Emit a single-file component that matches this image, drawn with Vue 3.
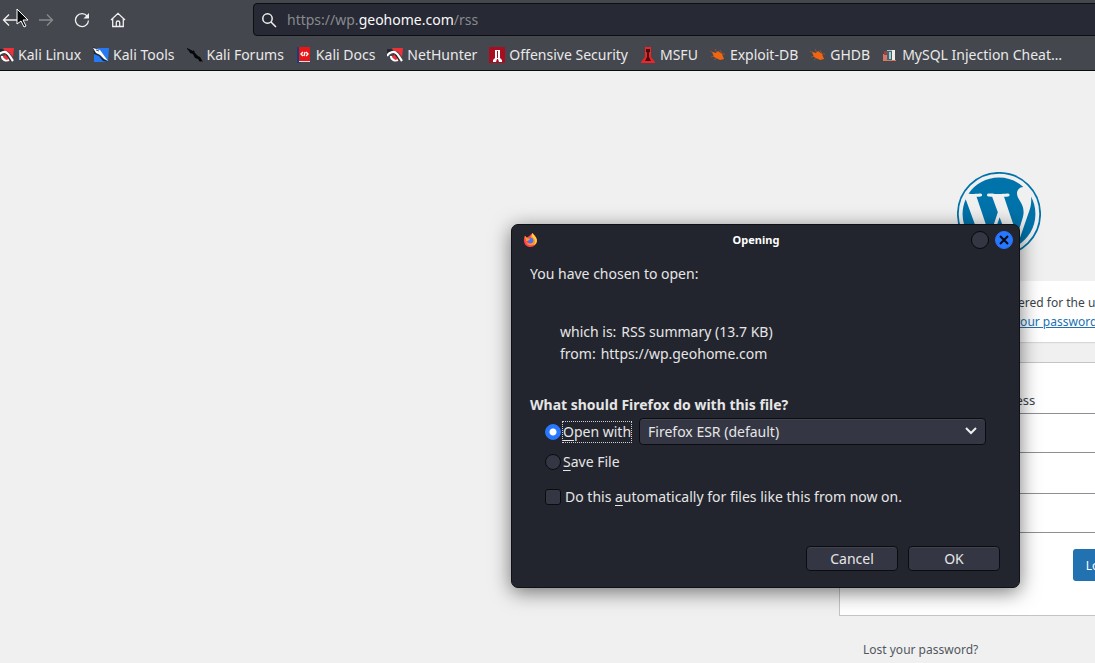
<script setup>
import { ref } from 'vue'

const action = ref('open')
const automatic = ref(false)
const bookmarks = [
  { label: 'Kali Linux', icon: 'dragon' },
  { label: 'Kali Tools', icon: 'tools' },
  { label: 'Kali Forums', icon: 'forums' },
  { label: 'Kali Docs', icon: 'docs' },
  { label: 'NetHunter', icon: 'dragon' },
  { label: 'Offensive Security', icon: 'offsec' },
  { label: 'MSFU', icon: 'msfu' },
  { label: 'Exploit-DB', icon: 'bug' },
  { label: 'GHDB', icon: 'bug' },
  { label: 'MySQL Injection Cheat…', icon: 'books' }
]
</script>

<template>
  <div class="browser">
    <header class="chrome">
      <div class="nav">
        <button class="tool" aria-label="Back">
          <svg viewBox="0 0 16 16"><path d="M15 8H1.500M7 2.500 1.500 8 7 13.500" /></svg>
        </button>
        <button class="tool dim" aria-label="Forward">
          <svg viewBox="0 0 16 16"><path d="M1 8h13.500M9 2.500 14.500 8 9 13.500" /></svg>
        </button>
        <button class="tool" aria-label="Reload">
          <svg viewBox="0 0 16 16"><path d="M13.200 4.200A6.500 6.500 0 1 0 14.500 8.500" /><path class="solid" d="M15 1v5.600H9.400z" /></svg>
        </button>
        <button class="tool" aria-label="Home">
          <svg viewBox="0 0 16 16"><path d="M1 8 8 1.300 15 8M2.700 6.800v7.700h10.600V6.800M6.300 14.500v-4.200q0-1.300 1.700-1.300t1.700 1.300v4.200" /></svg>
        </button>
        <div class="url">
          <svg viewBox="0 0 16 16"><circle cx="6.500" cy="6.500" r="4.700" /><path d="m10 10 5 5" /></svg>
          <a href="#">https://wp.<b>geohome.com</b>/rss</a>
        </div>
      </div>
      <nav class="bookmarks">
        <a v-for="b in bookmarks" :key="b.label" href="#">
          <svg v-if="b.icon === 'dragon'" viewBox="0 0 16 16">
            <path fill="#ef3038" d="M5 1h11l-1 9-4-5-5-2zM5 9l3 5h4l-3-4z" />
            <path fill="#24262c" d="M0 2h4l3 2-7 5zM8 7l4 2 3 5-4-1-3-3z" />
            <path fill="none" stroke="#fff" stroke-width="2.200" d="M0 9C2 5 7 4 9 6c2 1 3 4 6 8M4 9c0 4 4 5 7 4" />
            <path fill="#ef3038" d="m5 9 2-2 4 5-3 1z" />
            <path fill="#3c3e45" d="M5 8c1-1 2-1 3-1L6 9z" />
          </svg>
          <svg v-else-if="b.icon === 'tools'" viewBox="0 0 16 16">
            <path fill="#2679f2" d="M1 1h15l-1 14H1z" />
            <path fill="#1b2838" d="m0 0 5 2 5 5 5 8-5-1-4-5-5-2z" />
            <path fill="#fff" d="m0 1 7 2 3 4 5 7-4-2-4-4-4-2z" />
            <path fill="none" stroke="#1b2838" stroke-width=".8" d="m3 3 3 1" />
          </svg>
          <svg v-else-if="b.icon === 'forums'" viewBox="0 0 16 16">
            <path fill="#050607" d="m0 1 6 3 2 2 3 3 2 1 3 5-2-1-1 1-2-3-3-1-2-4-3-1-1-2-2-2zM6 3l2 2-2 1z" />
          </svg>
          <svg v-else-if="b.icon === 'docs'" viewBox="0 0 16 16">
            <path fill="#173d7c" d="M1 0h4v16H1z" /><path fill="#e81616" d="M3 0h11v14H3z" /><path fill="#e0dfdf" d="M3 14h11v1H3z" />
            <path fill="none" stroke="#fff" stroke-width="1.300" d="m7 5-2 2 2 2M10 5l2 2-2 2M8 9l1-4" />
          </svg>
          <svg v-else-if="b.icon === 'offsec'" viewBox="0 0 16 16">
            <path fill="#a90d20" d="M0 0h16v16H0z" />
            <path fill="#fff" d="M6 3h5v8l2 2v2h-3l-1-3H8l-1 3H4v-2l2-2z" /><path fill="#a90d20" d="M8 4h1v7H8z" />
          </svg>
          <svg v-else-if="b.icon === 'msfu'" viewBox="0 0 16 16">
            <path fill="#ef2429" d="M5 0h6v10l4 5v1H1v-1l4-5z" /><path fill="#470b10" d="M7 3h2v7l2 4H5l2-4zM6 2h4v3H6z" />
          </svg>
          <svg v-else-if="b.icon === 'bug'" viewBox="0 0 16 16">
            <path fill="none" stroke="#a95a31" stroke-width=".7" d="m0 4 6 3M5 2l2 4M10 3l2 4M15 7h-4M1 10l4-1M4 13l4-3M14 12l-3-2" />
            <path fill="#f06412" d="m2 5 4 1 2-2 4 3 2 5-4 1-6-3z" />
          </svg>
          <svg v-else viewBox="0 0 16 16">
            <path fill="#d77962" d="M1 7h4v7H1zM1 13h13v1H1z" /><path fill="#a13d4a" d="M2 4h3v4H2z" />
            <path fill="#43656c" d="M5 3h6v10H5z" /><path fill="#a7cbd0" d="M7 5h2v7H7zM5 3h6v1H5z" /><path fill="#f2eee8" d="M10 3h3v10h-3z" />
          </svg>
          <span>{{ b.label }}</span>
        </a>
      </nav>
      <svg class="pointer" viewBox="0 0 13 20"><path d="M1 1v15l4-3 3 6 2-1-3-6h5z" /></svg>
    </header>

    <main class="page">
      <div class="login">
        <svg class="logo" viewBox="0 0 24 24" role="img" aria-label="WordPress">
          <circle cx="12" cy="12" r="11.760" />
          <path transform="translate(.42 .42) scale(.965)" d="M21.469 6.825c.84 1.537 1.318 3.300 1.318 5.175 0 3.979-2.156 7.456-5.363 9.325l3.295-9.527c.615-1.540.820-2.771.820-3.864 0-.405-.026-.780-.070-1.110m-7.981.105c.647-.030 1.232-.105 1.232-.105.582-.075.514-.930-.067-.899 0 0-1.755.135-2.880.135-1.064 0-2.850-.150-2.850-.150-.585-.030-.661.855-.075.885 0 0 .540.061 1.125.090l1.680 4.605-2.370 7.080L5.354 6.900c.649-.030 1.234-.100 1.234-.100.585-.075.516-.930-.065-.896 0 0-1.746.138-2.874.138-.200 0-.438-.008-.690-.015C4.911 3.150 8.235 1.215 12 1.215c2.809 0 5.365 1.072 7.286 2.833-.046-.003-.091-.009-.141-.009-1.060 0-1.812.923-1.812 1.914 0 .890.513 1.643 1.060 2.531.411.720.890 1.643.890 2.977 0 .915-.354 1.994-.821 3.479l-1.075 3.585-3.900-11.610zM12 22.784c-1.059 0-2.081-.153-3.048-.437l3.237-9.406 3.315 9.087c.024.053.050.101.078.149-1.120.393-2.325.609-3.582.609M1.211 12c0-1.564.336-3.050.935-4.390L7.290 21.709C3.694 19.960 1.212 16.271 1.211 12" />
        </svg>
        <div class="message">registered for the u<br><a href="#">your password</a></div>
        <form class="form" @submit.prevent>
          <label for="user">Username or Email Address</label>
          <input id="user" type="text">
          <input id="pass" type="password" aria-label="Password">
          <button class="login-button">Log In</button>
        </form>
        <a class="lost" href="#">Lost your password?</a>
      </div>
    </main>

    <section class="dialog" role="dialog" aria-labelledby="title">
      <div class="titlebar">
        <svg class="firefox" viewBox="0 0 16 16">
          <path fill="#ff4055" d="M1 6 2 3l2 2 3-2 3-3 3 3 2 4c0 5-3 8-7 8s-7-3-7-7z" />
          <path fill="#ff9a24" d="m2 3 2 2 4-1 3 4c0 4-6 4-8 1 1 4 7 6 10 2 2-3 0-7-3-8L2 6z" />
          <path fill="#ffd33d" d="M10 0 9 3l3 3c2 3 1 6-2 7 4 0 6-4 4-8z" />
          <circle cx="8" cy="8" r="3" fill="#4c6ff5" /><path fill="#ff9a24" d="m3 5 5 1-2 2-3 1z" />
        </svg>
        <h1 id="title">Opening</h1>
        <button class="round" aria-label="Maximize"></button>
        <button class="round close" aria-label="Close"><svg viewBox="0 0 10 10"><path d="m1 1 8 8M9 1 1 9" /></svg></button>
      </div>
      <div class="body">
        <p>You have chosen to open:</p>
        <div class="details">
          <p><span>which is:</span><span>RSS summary (13.7 KB)</span></p>
          <p><span>from:</span><span>https://wp.geohome.com</span></p>
        </div>
        <h2>What should Firefox do with this file?</h2>
        <div class="option open">
          <input id="open" v-model="action" type="radio" value="open">
          <label class="focused" for="open"><u>O</u>pen with</label>
          <div class="picker">
            <select aria-label="Application"><option>Firefox ESR (default)</option></select>
            <svg viewBox="0 0 12 8"><path d="m1 1 5 5 5-5" /></svg>
          </div>
        </div>
        <div class="option save">
          <input id="save" v-model="action" type="radio" value="save">
          <label for="save"><u>S</u>ave File</label>
        </div>
        <div class="option auto">
          <input id="auto" v-model="automatic" type="checkbox">
          <label for="auto">Do this <u>a</u>utomatically for files like this from now on.</label>
        </div>
        <div class="actions"><button>Cancel</button><button>OK</button></div>
      </div>
    </section>
  </div>
</template>

<style>
body { margin: 0; background: #f0f0f0; }
</style>

<style scoped>
* { box-sizing: border-box; }
.browser { position: relative; min-height: 100vh; overflow: hidden; font: 14px/22px "Noto Sans", sans-serif; }
button, input, select { font: inherit; margin: 0; }
h1, h2, p { margin: 0; }
a { color: inherit; text-decoration: none; }
.chrome { position: relative; height: 71px; background: #44474d; border-bottom: 1px solid #0c0d10; color: #e9e9ea; }
.nav { height: 39px; display: flex; align-items: center; gap: 20px; padding-left: 2px; }
.tool { width: 16px; height: 16px; padding: 0; border: 0; background: none; flex: none; }
.tool svg { display: block; width: 16px; height: 16px; fill: none; stroke: #f0f0f0; stroke-width: 1.300; }
.tool .solid { fill: #f0f0f0; stroke: none; }
.dim { opacity: .4; }
.url { flex: 1; height: 33px; margin: 0 -8px 0 107px; padding-left: 7px; display: flex; align-items: center; gap: 10px; background: #272934; border: 1px solid #0d0e12; border-radius: 4px; color: #87898f; }
.url svg { width: 16px; height: 16px; fill: none; stroke: #f0f0f0; stroke-width: 1.500; }
.url b { font-weight: 400; color: #fafafa; }
.bookmarks { display: flex; gap: 12px; margin-left: -2px; height: 32px; align-items: center; white-space: nowrap; }
.bookmarks a { display: flex; gap: 4px; align-items: center; flex: none; }
.bookmarks svg { width: 16px; height: 16px; }
.pointer { position: absolute; left: 16px; top: 8px; width: 13px; height: 20px; }
.pointer path { fill: #08090b; stroke: #fff; }
.page { display: flex; justify-content: flex-end; color: #3c434a; font-size: 12px; line-height: 19px; }
.login { width: 320px; flex: none; margin-right: -64px; padding-top: 101px; }
.logo { display: block; width: 84px; height: 84px; margin: 0 auto 25px 118px; fill: #0073aa; }
.logo circle { fill: none; stroke: #0073aa; stroke-width: .5; }
.message { height: 61px; padding: 12px 0 12px 147px; background: #fff; box-shadow: 0 1px 1px #0000001a; white-space: nowrap; }
.message a { color: #2271b1; text-decoration: underline; margin-left: 28px; }
.form { margin-top: 20px; height: 254px; padding: 27px 24px; background: #fff; border: 1px solid #c3c4c7; }
.form label { display: block; font-size: 13px; line-height: 20px; margin-bottom: 3px; padding-left: 2px; }
.form input { display: block; width: 100%; height: 40px; border: 1px solid #8c8f94; border-radius: 4px; background: #fff; margin-bottom: 40px; }
.form #pass { margin-bottom: 16px; }
.login-button { display: block; margin-left: auto; width: 61px; height: 32px; padding: 0; background: #2271b1; color: #fff; border: 0; border-radius: 3px; }
.lost { display: block; margin: 24px 24px 0; color: #50575e; }
.dialog { position: absolute; left: 511px; top: 224px; width: 509px; color: #e6e6e7; background: #23252e; border: 1px solid #101116; border-radius: 7px; box-shadow: 0 4px 20px #0008; font-size: 14px; }
.titlebar { height: 30px; display: flex; align-items: center; gap: 6px; padding: 0 6px 0 11px; }
.firefox { width: 15px; height: 15px; margin-right: 3px; }
h1 { flex: 1; text-align: center; font-size: 11px; color: #fff; }
.round { width: 18px; height: 18px; padding: 3px; border: 1px solid #07080b; border-radius: 50%; background: #343743; }
.close { background: #2777ff; border-color: #2777ff; }
.close svg { display: block; width: 10px; height: 10px; fill: none; stroke: #080b12; stroke-width: 2; }
.body { padding: 8px 19px 16px 18px; }
.details { margin: 36px 0 29px 30px; }
.details p { display: flex; gap: 5px; }
h2 { font-size: 14px; line-height: 22px; }
.option { display: flex; align-items: center; padding-left: 15px; }
.option input { appearance: none; flex: none; width: 16px; height: 16px; background: #343743; border: 1px solid #0b0c10; border-radius: 50%; margin-right: 2px; }
.option input:checked { background: radial-gradient(circle, #fff 0 3px, #2777ff 4px); border-color: #2777ff; }
.option .focused { outline: 1px dotted #d0d0d0; line-height: 20px; }
.option u { text-underline-offset: 3px; }
.open { margin: 2px 14px 6px 0; }
.save { margin-bottom: 13px; }
.option input[type=checkbox] { border-radius: 3px; margin-right: 4px; }
.picker { position: relative; flex: 1; margin-left: 8px; }
select { display: block; appearance: none; width: 100%; height: 27px; padding: 0 8px; border: 1px solid #0b0c10; border-radius: 4px; background: #343743; color: inherit; box-shadow: inset 0 1px #41444f; }
.picker svg { position: absolute; right: 9px; top: 9px; width: 12px; height: 8px; fill: none; stroke: #eee; stroke-width: 2; }
.actions { display: flex; justify-content: flex-end; gap: 10px; margin-top: 38px; }
.actions button { width: 92px; height: 25px; padding: 0; border: 1px solid #0b0c10; border-radius: 4px; background: #343743; color: inherit; box-shadow: inset 0 1px #41444f; }
</style>
